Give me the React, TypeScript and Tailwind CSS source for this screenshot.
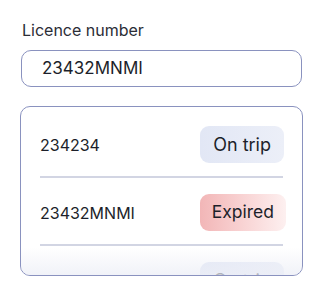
import React from "react";

const rows = [
  { id: "234234", status: "On trip", kind: "trip" },
  { id: "23432MNMI", status: "Expired", kind: "expired" },
  { id: "00BH0050B", status: "On trip", kind: "trip" },
];

export default function App() {
  return (
    <div
      className="w-[322px] h-[296px] bg-white text-[#1c1f2a]"
      style={{ fontFamily: "Inter, 'Noto Sans', sans-serif" }}
    >
      <div className="pt-[19px] pl-[21px] pr-[20px]">
        <div className="text-[16px] leading-[22px] text-[#2b2d36] pl-[1px]">Licence number</div>
        <div className="mt-[9px] h-[37px] w-[281px] rounded-[10px] border border-[#8a92bf] flex items-center pl-[20px] text-[17px]">
          23432MNMI
        </div>
      </div>
      <div className="ml-[20px] mt-[19px] w-[283px] h-[170px] relative rounded-[10px] border border-[#8a92bf] overflow-hidden">
        <div className="px-[19px] pt-[3px]">
          {rows.map((r, i) => (
            <div key={r.id}>
              {i > 0 && <div className="h-[2px] bg-[#d2d5e3]" />}
              <div className="flex items-center justify-between pt-[16px] pb-[13px]">
                <span className="text-[16px]">{r.id}</span>
                <span
                  className={
                    r.kind === "trip"
                      ? "h-[37px] flex items-center px-[13px] rounded-[9px] text-[18px] bg-gradient-to-r from-[#e2e7f5] to-[#eceff8] mr-[-1px]"
                      : "h-[37px] flex items-center px-[12px] rounded-[9px] text-[17.5px] bg-gradient-to-r from-[#f2b6b7] to-[#fdf0f0] mr-[-3px]"
                  }
                >
                  {r.status}
                </span>
              </div>
            </div>
          ))}
        </div>
        <div className="absolute left-0 right-0 bottom-0 h-[28px] bg-gradient-to-b from-[rgba(255,255,255,0)] to-[rgba(236,238,246,0.75)]" />
      </div>
    </div>
  );
}
